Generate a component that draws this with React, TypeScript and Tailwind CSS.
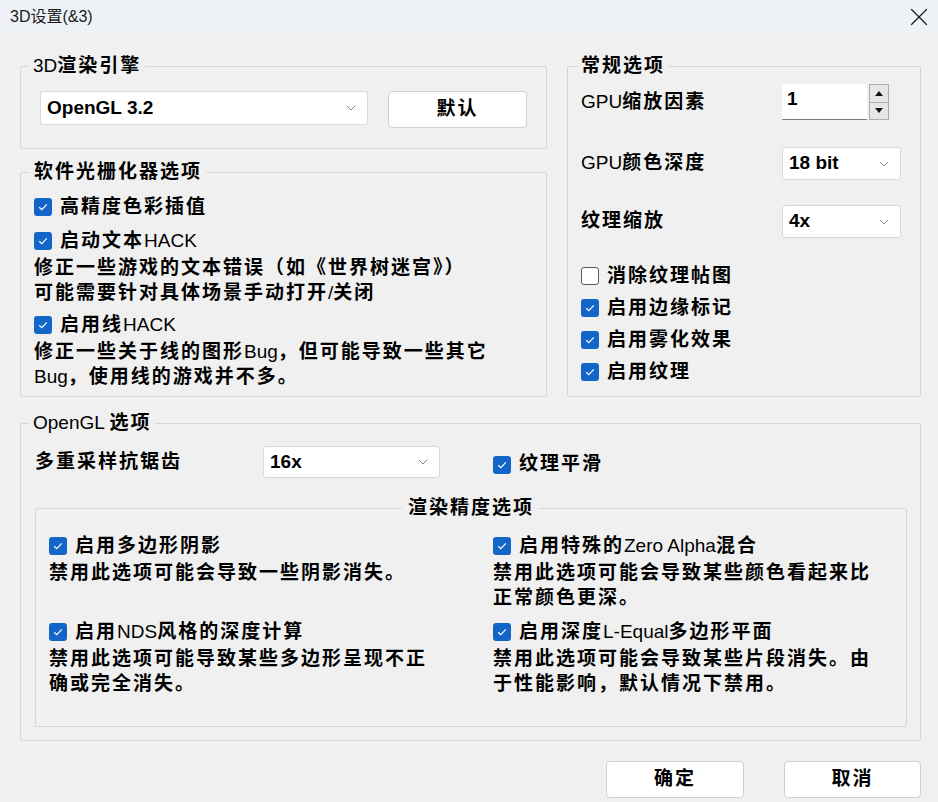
import React from 'react'
import { ChevronDown, X } from 'lucide-react'

// CJK runs are drawn bold with extra tracking, Latin runs stay regular
const CJK = /([\u2E80-\u9FFF\u3000-\u303F\uFF00-\uFFEF]+)/

function Txt({ s }: { s: string }) {
  return (
    <>
      {s.split(CJK).filter(Boolean).map((part, i) =>
        CJK.test(part)
          ? <span key={i} className="font-bold tracking-[2px]">{part}</span>
          : <span key={i}>{part}</span>
      )}
    </>
  )
}

function Check({ on = true }: { on?: boolean }) {
  if (!on) return <span className="w-[18px] h-[18px] rounded-[3px] bg-white border border-[#5a5a5a] shrink-0" />
  return (
    <span className="w-[18px] h-[18px] rounded-[3px] bg-[#1366c8] flex items-center justify-center shrink-0">
      <svg width="10" height="8" viewBox="0 0 10 8">
        <path d="M1.2 4.2 3.8 6.6 8.8 1.4" fill="none" stroke="white" strokeWidth="1.2" />
      </svg>
    </span>
  )
}

function Option({ label, desc = [], on = true }: { label: string; desc?: string[]; on?: boolean }) {
  return (
    <div className="flex flex-col">
      <div className="flex items-center gap-2 h-[28px]">
        <Check on={on} />
        <span className="whitespace-nowrap"><Txt s={label} /></span>
      </div>
      {desc.map(d => (
        <div key={d} className="whitespace-nowrap leading-[25px]"><Txt s={d} /></div>
      ))}
    </div>
  )
}

function Select({ value, className }: { value: string; className: string }) {
  return (
    <div className={`bg-white border border-[#d9d9d9] rounded-[3px] flex items-center justify-between pl-[6px] pr-[8px] text-[19px] font-bold ${className}`}>
      <span>{value}</span>
      <ChevronDown size={16} strokeWidth={1.25} className="text-[#6b6b6b]" />
    </div>
  )
}

function Legend({ s, className = '' }: { s: string; className?: string }) {
  return (
    <legend className={`px-[4px] leading-[24px] whitespace-nowrap ${className}`}><Txt s={s} /></legend>
  )
}

function Btn({ s, className = '' }: { s: string; className?: string }) {
  return (
    <div className={`bg-white border border-[#d0d0d0] rounded-[4px] flex items-center justify-center ${className}`}>
      <Txt s={s} />
    </div>
  )
}

export default function App() {
  return (
    <div className="w-[938px] h-[802px] bg-[#f0f0f0] flex flex-col overflow-hidden text-black text-[19px] font-['Liberation_Sans','Noto_Sans_CJK_SC',sans-serif]">
      {/* Title bar */}
      <div className="h-[34px] bg-[#eef2f7] flex items-center justify-between pl-[10px] pr-[4px] shrink-0">
        <span className="text-[16px] text-[#1b1b1b]">3D设置(&amp;3)</span>
        <X size={30} strokeWidth={1} className="text-[#1b1b1b]" />
      </div>

      <div className="flex-1 flex flex-col pl-[20px] pr-[17px] pt-[20px]">
        {/* Top row */}
        <div className="flex gap-[20px] items-stretch">
          <div className="w-[527px] flex flex-col">
            <fieldset className="border border-[#d6d6d6] rounded-[2px] min-w-0 px-[19px] pt-[13px] pb-[20px]">
              <Legend s="3D渲染引擎" className="ml-[-11px]" />
              <div className="flex items-start gap-[20px]">
                <Select value="OpenGL 3.2" className="w-[328px] h-[34px]" />
                <Btn s="默认" className="w-[139px] h-[37px]" />
              </div>
            </fieldset>

            <fieldset className="flex-1 mt-[11px] border border-[#d6d6d6] rounded-[2px] min-w-0 pl-[13px] pr-[10px] pt-[9px] pb-[7px]">
              <Legend s="软件光栅化器选项" className="ml-[-4px]" />
              <div className="flex flex-col gap-[6px]">
                <Option label="高精度色彩插值" />
                <Option label="启动文本HACK" desc={['修正一些游戏的文本错误（如《世界树迷宫》）', '可能需要针对具体场景手动打开/关闭']} />
                <Option label="启用线HACK" desc={['修正一些关于线的图形Bug，但可能导致一些其它', 'Bug，使用线的游戏并不多。']} />
              </div>
            </fieldset>
          </div>

          <fieldset className="flex-1 border border-[#d6d6d6] rounded-[2px] min-w-0 pl-[13px] pr-[19px] pt-[6px] pb-[8px]">
            <Legend s="常规选项" className="ml-[-4px]" />
            <div className="flex items-center h-[36px]">
              <span className="w-[201px]"><Txt s="GPU缩放因素" /></span>
              <div className="flex gap-[2px]">
                <div className="w-[85px] h-[36px] bg-white border-b border-[#7a7a7a] px-[5px] pt-[1px] text-[19px] font-bold leading-[28px]">1</div>
                <div className="flex flex-col w-[20px] h-[36px]">
                  <div className="flex-1 border border-[#adadad] bg-[#e6e6e6] flex items-center justify-center">
                    <svg width="8" height="5" viewBox="0 0 8 5"><path d="M0 5 4 0 8 5Z" fill="#111" /></svg>
                  </div>
                  <div className="flex-1 border border-t-0 border-[#adadad] bg-[#e6e6e6] flex items-center justify-center">
                    <svg width="8" height="5" viewBox="0 0 8 5"><path d="M0 0 4 5 8 0Z" fill="#111" /></svg>
                  </div>
                </div>
              </div>
            </div>
            <div className="flex items-center h-[33px] mt-[27px]">
              <span className="w-[201px]"><Txt s="GPU颜色深度" /></span>
              <Select value="18 bit" className="w-[119px] h-[33px]" />
            </div>
            <div className="flex items-center h-[33px] mt-[25px]">
              <span className="w-[201px]"><Txt s="纹理缩放" /></span>
              <Select value="4x" className="w-[119px] h-[33px]" />
            </div>
            <div className="flex flex-col mt-[22px]">
              {[
                { s: '消除纹理帖图', on: false },
                { s: '启用边缘标记', on: true },
                { s: '启用雾化效果', on: true },
                { s: '启用纹理', on: true },
              ].map(({ s, on }) => (
                <div key={s} className="flex items-center gap-2 h-[32px]">
                  <Check on={on} />
                  <Txt s={s} />
                </div>
              ))}
            </div>
          </fieldset>
        </div>

        {/* OpenGL options */}
        <fieldset className="mt-[14px] border border-[#d6d6d6] rounded-[2px] min-w-0 pl-[14px] pr-[13px] pt-[11px] pb-[13px]">
          <Legend s="OpenGL 选项" className="ml-[-6px]" />
          <div className="flex items-center h-[32px]">
            <span className="w-[228px]"><Txt s="多重采样抗锯齿" /></span>
            <Select value="16x" className="w-[177px] h-[32px]" />
            <div className="flex items-center gap-2 ml-[53px] mt-[5px]">
              <Check />
              <Txt s="纹理平滑" />
            </div>
          </div>

          <fieldset className="mt-[18px] border border-[#d6d6d6] rounded-[2px] min-w-0 px-[13px] pt-[12px] pb-[30px]">
            <Legend s="渲染精度选项" className="mx-auto px-[6px]" />
            <div className="grid grid-cols-[444px_1fr] gap-y-[8px]">
              <Option label="启用多边形阴影" desc={['禁用此选项可能会导致一些阴影消失。']} />
              <Option label="启用特殊的Zero Alpha混合" desc={['禁用此选项可能会导致某些颜色看起来比', '正常颜色更深。']} />
              <Option label="启用NDS风格的深度计算" desc={['禁用此选项可能导致某些多边形呈现不正', '确或完全消失。']} />
              <Option label="启用深度L-Equal多边形平面" desc={['禁用此选项可能会导致某些片段消失。由', '于性能影响，默认情况下禁用。']} />
            </div>
          </fieldset>
        </fieldset>

        {/* Dialog buttons */}
        <div className="mt-[20px] flex justify-end gap-[40px]">
          <Btn s="确定" className="w-[138px] h-[37px]" />
          <Btn s="取消" className="w-[137px] h-[37px]" />
        </div>
      </div>
    </div>
  )
}
